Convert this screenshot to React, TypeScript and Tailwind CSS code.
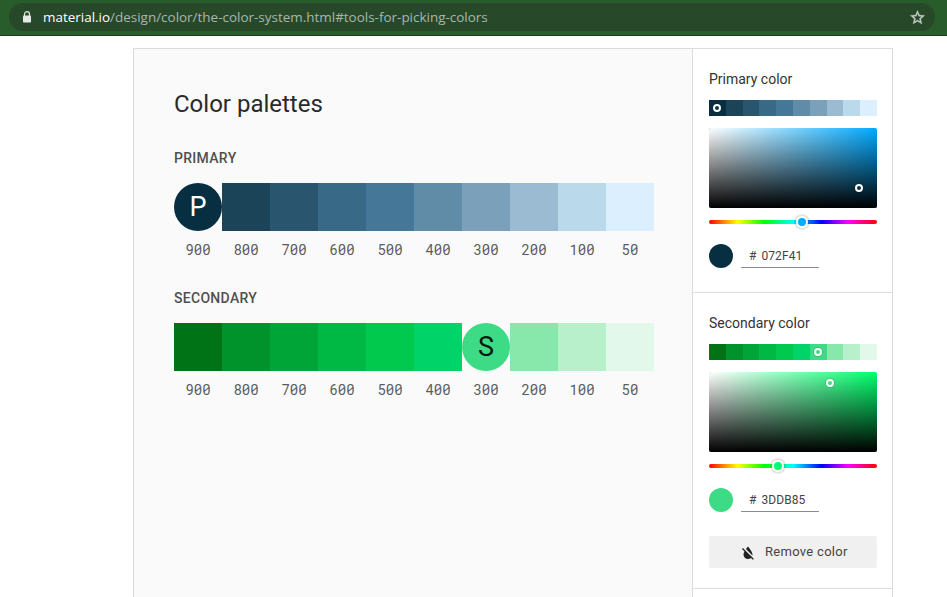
import React from "react";

type Swatch = { tone: string; bg: string };

const primary: Swatch[] = [
  { tone: "900", bg: "bg-[#072f41]" },
  { tone: "800", bg: "bg-[#1c4459]" },
  { tone: "700", bg: "bg-[#29566e]" },
  { tone: "600", bg: "bg-[#386986]" },
  { tone: "500", bg: "bg-[#457898]" },
  { tone: "400", bg: "bg-[#608ca8]" },
  { tone: "300", bg: "bg-[#7aa0ba]" },
  { tone: "200", bg: "bg-[#9bbbd2]" },
  { tone: "100", bg: "bg-[#bad9ea]" },
  { tone: "50", bg: "bg-[#dceffe]" },
];

const secondary: Swatch[] = [
  { tone: "900", bg: "bg-[#007317]" },
  { tone: "800", bg: "bg-[#00932c]" },
  { tone: "700", bg: "bg-[#00a538]" },
  { tone: "600", bg: "bg-[#00b844]" },
  { tone: "500", bg: "bg-[#00c94e]" },
  { tone: "400", bg: "bg-[#00d468]" },
  { tone: "300", bg: "bg-[#3ddb85]" },
  { tone: "200", bg: "bg-[#88e7ab]" },
  { tone: "100", bg: "bg-[#b8f0cc]" },
  { tone: "50", bg: "bg-[#e2f8ea]" },
];

function Palette({ title, swatches, selected, letter, ink }: {
  title: string;
  swatches: Swatch[];
  selected: string;
  letter: string;
  ink: string;
}) {
  return (
    <section className="h-[140px]">
      <h2 className="text-[14px] leading-5 font-medium tracking-[0.3px] text-[#505050]">{title}</h2>
      <div className="mt-[15px] flex w-[480px]">
        {swatches.map((s) => (
          <div key={s.tone} className="w-12">
            <div
              className={`flex h-12 items-center justify-center text-[27px] leading-none ${s.bg} ${ink} ${
                s.tone === selected ? "rounded-full" : ""
              }`}
            >
              {s.tone === selected ? letter : null}
            </div>
            <div className="mt-[9px] text-center font-['Roboto_Mono','Inter',sans-serif] text-[14px] leading-5 tabular-nums slashed-zero text-[#5c5c5c]">
              {s.tone}
            </div>
          </div>
        ))}
      </div>
    </section>
  );
}

function Ring({ place }: { place: string }) {
  return (
    <span
      className={`absolute size-2 rounded-full border-2 border-white shadow-[0_0_0_1px_rgba(0,0,0,0.12)] ${place}`}
    />
  );
}

function Picker({ title, swatches, ringPlace, hue, dotPlace, knob, knobPlace, chip, hex }: {
  title: string;
  swatches: Swatch[];
  ringPlace: string;
  hue: string;
  dotPlace: string;
  knob: string;
  knobPlace: string;
  chip: string;
  hex: string;
}) {
  return (
    <div className="px-4 pt-5">
      <h3 className="text-[14px] leading-5 text-[#333]">{title}</h3>
      <div className="relative mt-[11px] flex h-4 w-[168px]">
        {swatches.map((s) => (
          <div key={s.tone} className={`flex-1 ${s.bg}`} />
        ))}
        <Ring place={ringPlace} />
      </div>
      <div className={`relative mt-3 h-20 w-[168px] rounded-[2px] ${hue}`}>
        <div className="absolute inset-0 rounded-[2px] bg-[linear-gradient(to_top,#000,rgba(0,0,0,0)),linear-gradient(to_right,#fff,rgba(255,255,255,0))]" />
        <Ring place={dotPlace} />
      </div>
      <div className="relative mt-3 h-1 w-[168px] rounded-[2px] bg-[linear-gradient(to_right,#f00,#ff0_17%,#0f0_33%,#0ff_50%,#00f_67%,#f0f_83%,#f00)]">
        <span
          className={`absolute -top-1 size-3 rounded-full border-2 border-white shadow-[0_0_0_2px_rgba(0,0,0,0.1)] ${knob} ${knobPlace}`}
        />
      </div>
      <div className="mt-5 flex h-6">
        <span className={`size-6 rounded-full ${chip}`} />
        <div className="ml-2 h-6 w-[78px] border-b border-[#8c8c8c] pl-2 text-[12px] leading-6 whitespace-pre text-[#444]">
          <span className="mr-[5px]">#</span>
          <span className="tracking-[0.1px]">{hex}</span>
        </div>
      </div>
    </div>
  );
}

export default function App() {
  return (
    <div className="h-[597px] w-[947px] overflow-hidden bg-white font-['Roboto',sans-serif]">
      <header className="h-9 border-b border-[#1d431f] bg-[#285c2b] px-[9px] pt-[3px]">
        <div className="flex h-7 w-[926px] items-center rounded-full bg-[#27492a] pr-[9px] pl-[13px]">
          <svg width="10" height="12" viewBox="0 0 10 12" className="-mt-px">
            <path d="M2.5 5V3.2a2.5 2.5 0 0 1 5 0V5" fill="none" stroke="#dfe6df" strokeWidth="1.2" />
            <rect x="1" y="4.5" width="8" height="7" rx="0.8" fill="#e6eae6" />
          </svg>
          <div className="ml-[11px] font-['Open_Sans',sans-serif] text-[13.46px] leading-5 whitespace-nowrap text-[#a9b7aa]">
            <span className="text-white">material.io</span>/design/color/the-color-system.html#tools-for-picking-colors
          </div>
          <svg width="17" height="17" viewBox="0 0 24 24" className="ml-auto" fill="#c3cdc4" stroke="#c3cdc4" strokeWidth="0.5">
            <path d="M22 9.24l-7.19-.62L12 2 9.19 8.63 2 9.24l5.46 4.73L5.82 21 12 17.27 18.18 21l-1.63-7.03L22 9.24zM12 15.4l-3.76 2.27 1-4.28-3.32-2.88 4.38-.38L12 6.1l1.71 4.04 4.38.38-3.32 2.88 1 4.28L12 15.4z" />
          </svg>
        </div>
      </header>
      <main className="mt-3 ml-[133px] flex h-[549px] w-[760px] border border-b-0 border-[#dcdcdc]">
        <div className="flex-1 bg-[#fafafa] pt-[39px] pl-10">
          <h1 className="text-[24px] leading-8 text-[#2a2a2a]">Color palettes</h1>
          <div className="mt-7">
            <Palette title="PRIMARY" swatches={primary} selected="900" letter="P" ink="text-white" />
            <Palette title="SECONDARY" swatches={secondary} selected="300" letter="S" ink="text-[#06180e]" />
          </div>
        </div>
        <aside className="w-[200px] border-l border-[#dcdcdc] bg-white">
          <div className="h-[244px] border-b border-[#dcdcdc]">
            <Picker
              title="Primary color"
              swatches={primary}
              ringPlace="left-1 top-1"
              hue="bg-[#00aaff]"
              dotPlace="left-[146px] top-[56px]"
              knob="bg-[#00aaff]"
              knobPlace="left-[87px]"
              chip="bg-[#072f41]"
              hex="072F41"
            />
          </div>
          <div className="h-[296px] border-b border-[#dcdcdc]">
            <Picker
              title="Secondary color"
              swatches={secondary}
              ringPlace="left-[105px] top-1"
              hue="bg-[#00ff6e]"
              dotPlace="left-[117px] top-[7px]"
              knob="bg-[#00ff6e]"
              knobPlace="left-[63px]"
              chip="bg-[#3ddb85]"
              hex="3DDB85"
            />
            <button className="mt-6 ml-4 flex h-8 w-[168px] items-center rounded-[2px] bg-[#f0f0f0] pl-[30px] text-[13px] tracking-[0.3px] text-[#444]">
              <svg width="18" height="18" viewBox="0 0 24 24" fill="#222" className="mt-[2px]">
                <path d="M18 14c0-4-6-10.8-6-10.8s-1.33 1.51-2.73 3.52l8.59 8.59c.09-.42.14-.86.14-1.31zm-.88 3.12L12.5 12.5 5.27 5.27 4 6.55l3.32 3.32C6.55 11.32 6 12.79 6 14c0 3.31 2.69 6 6 6 1.52 0 2.9-.57 3.96-1.5l2.63 2.63 1.27-1.27-2.74-2.74z" />
              </svg>
              <span className="ml-2">Remove color</span>
            </button>
          </div>
        </aside>
      </main>
    </div>
  );
}
